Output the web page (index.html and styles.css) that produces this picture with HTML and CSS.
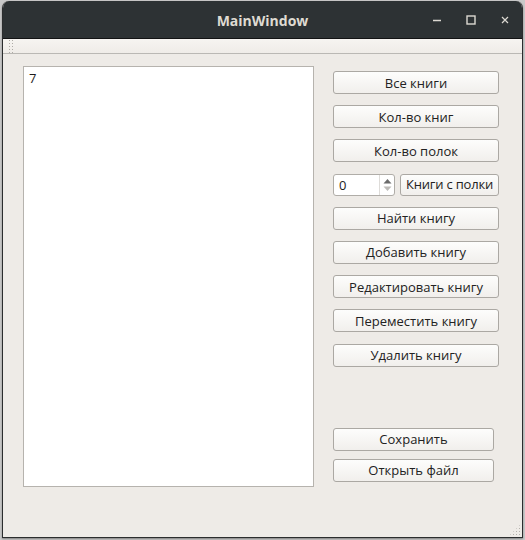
FILE: index.html
```html
<!DOCTYPE html>
<html>
<head>
<meta charset="utf-8">
<link rel="stylesheet" href="styles.css">
</head>
<body>
<div class="window">
  <div class="titlebar">
    <div></div>
    <div class="title">MainWindow</div>
    <div class="controls">
      <div class="ctl"><svg width="10" height="10" viewBox="0 0 10 10"><line x1="1" y1="5.5" x2="9" y2="5.5" stroke="#dcd9d2" stroke-width="1.3"/></svg></div>
      <div class="ctl"><svg width="10" height="10" viewBox="0 0 10 10"><rect x="1" y="1" width="8" height="8" fill="none" stroke="#dcd9d2" stroke-width="1.4"/></svg></div>
      <div class="ctl"><svg width="10" height="10" viewBox="0 0 10 10"><path d="M2 2 L8 8 M8 2 L2 8" stroke="#dcd9d2" stroke-width="1.2"/></svg></div>
    </div>
  </div>
  <div class="toolbar"><div class="handle"></div></div>
  <div class="main">
    <div class="textbox">7</div>
    <div class="side">
      <div class="btns">
        <button class="btn">Все книги</button>
        <button class="btn">Кол-во книг</button>
        <button class="btn">Кол-во полок</button>
        <div class="spinrow">
          <div class="spin">
            <span class="spinval">0</span>
            <div class="arrows">
              <svg width="9" height="6" viewBox="0 0 9 6"><path d="M0.5 5.5 L4.5 1 L8.5 5.5 Z" fill="#6b6b6b"/></svg>
              <svg width="9" height="6" viewBox="0 0 9 6"><path d="M0.5 0.5 L4.5 5 L8.5 0.5 Z" fill="#bdbbb8"/></svg>
            </div>
          </div>
          <button class="btn small">Книги с полки</button>
        </div>
        <button class="btn">Найти книгу</button>
        <button class="btn">Добавить книгу</button>
        <button class="btn">Редактировать книгу</button>
        <button class="btn">Переместить книгу</button>
        <button class="btn">Удалить книгу</button>
      </div>
      <div class="btns2">
        <button class="btn">Сохранить</button>
        <button class="btn">Открыть файл</button>
      </div>
    </div>
  </div>
  <div class="grip"></div>
</div>
</body>
</html>
```
FILE: styles.css
```css
html, body {
  margin: 0;
  padding: 0;
}
body {
  width: 525px;
  height: 540px;
  background: #c9c9c9;
  overflow: hidden;
  font-family: "Open Sans", "Noto Sans", sans-serif;
}
.window {
  position: relative;
  box-sizing: border-box;
  width: 521px;
  height: 537px;
  margin: 1px 0 0 2px;
  border: 1px solid #2b2d2e;
  border-top: none;
  border-radius: 7px 7px 0 0;
  background: #eeebe7;
  display: flex;
  flex-direction: column;
  overflow: hidden;
  box-shadow: 0 1px 2px rgba(0,0,0,0.35);
}
.titlebar {
  height: 37px;
  flex: none;
  background: #2d3234;
  border-bottom: 1px solid #121314;
  display: grid;
  grid-template-columns: 1fr auto 1fr;
  align-items: center;
}
.title {
  color: #dfdbd2;
  font-family: "Open Sans", sans-serif;
  font-weight: 700;
  font-size: 14px;
  padding-top: 1px;
}
.controls {
  display: flex;
  justify-content: flex-end;
}
.ctl {
  width: 34px;
  height: 37px;
  display: flex;
  align-items: center;
  justify-content: center;
}
.toolbar {
  height: 14px;
  flex: none;
  background: linear-gradient(#f6f4f1, #efece8);
  border-bottom: 1px solid #bab8b4;
  padding-left: 5px;
}
.handle {
  width: 5px;
  height: 15px;
  background-image: radial-gradient(circle, #aeaba6 0.8px, transparent 1px);
  background-size: 3px 3px;
  background-position: 0 0;
}
.main {
  flex: 1;
  display: flex;
  padding: 12px 0 0 20px;
}
.textbox {
  box-sizing: border-box;
  width: 291px;
  height: 421px;
  background: #fff;
  border: 1px solid #b6b3ae;
  font-size: 13px;
  color: #1c1c1c;
  padding: 3px 0 0 5px;
  line-height: 17px;
}
.side {
  margin-left: 19px;
  display: flex;
  flex-direction: column;
}
.btns {
  margin-top: 5px;
  display: flex;
  flex-direction: column;
  gap: 11.2px;
  width: 166px;
}
.btn {
  box-sizing: border-box;
  height: 23px;
  border: 1px solid #aba8a3;
  border-radius: 3px;
  background: linear-gradient(#fdfdfc, #f1efec);
  font-family: "Open Sans", "Noto Sans", sans-serif;
  font-size: 13px;
  color: #222;
  padding: 0;
  margin: 0;
  line-height: 20px;
  text-align: center;
  white-space: nowrap;
}
.spinrow {
  display: flex;
  gap: 5px;
  height: 22px;
}
.spin {
  box-sizing: border-box;
  width: 62px;
  height: 22px;
  border: 1px solid #b0ada8;
  border-radius: 3px;
  background: #fff;
  display: flex;
  align-items: center;
}
.spinval {
  flex: 1;
  font-size: 13px;
  color: #1c1c1c;
  padding-left: 5px;
}
.arrows {
  width: 14px;
  height: 20px;
  border-left: 1px solid #dedcd9;
  display: flex;
  flex-direction: column;
  justify-content: center;
  align-items: center;
  gap: 2px;
}
.btn.small {
  width: 99px;
  height: 22px;
  line-height: 19px;
  letter-spacing: -0.2px;
}
.btns2 {
  margin-top: 61px;
  display: flex;
  flex-direction: column;
  gap: 8px;
  width: 161px;
}
.grip {
  position: absolute;
  right: 1px;
  bottom: 1px;
  width: 12px;
  height: 12px;
  background-image: radial-gradient(circle, #b3b0ab 0.8px, transparent 1px);
  background-size: 3px 3px;
  clip-path: polygon(100% 0, 100% 100%, 0 100%);
}
```
